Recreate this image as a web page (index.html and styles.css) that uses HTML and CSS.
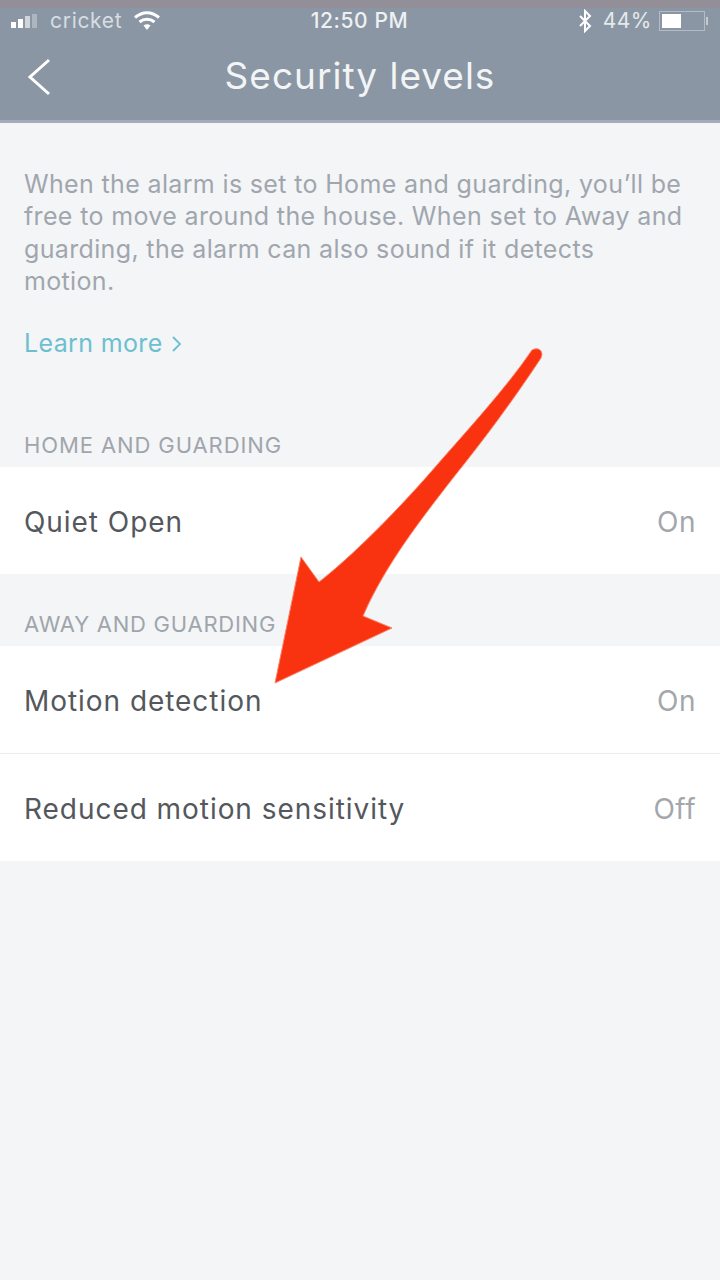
FILE: index.html
```html
<!DOCTYPE html>
<html lang="en">
<head>
<meta charset="utf-8">
<title>Security levels</title>
<link rel="stylesheet" href="styles.css">
</head>
<body>
<div class="screen">
  <header class="header">
    <div class="status">
      <div class="status-left">
        <svg class="signal" width="34" height="18" viewBox="0 0 34 18"><rect x="0" y="10" width="5" height="6" fill="#fff"/><rect x="7" y="7" width="5" height="9" fill="#fff"/><rect x="14" y="4" width="5" height="12" fill="#fff" opacity=".6"/><rect x="21" y="2" width="5" height="14" fill="#fff" opacity=".3"/></svg>
        <span class="carrier">cricket</span>
        <svg class="wifi" width="28" height="22" viewBox="0 0 28 22"><path d="M2 7.500C9.500 1 18.500 1 26 7.500M6.500 12C11 8.200 17 8.200 21.500 12" fill="none" stroke="#fff" stroke-width="3"/><path d="M10.500 15.500Q14 13 17.500 15.500L14 20Z" fill="#fff"/></svg>
      </div>
      <span class="time">12:50 PM</span>
      <div class="status-right">
        <svg class="bt" width="16" height="24" viewBox="0 0 16 24"><path d="M3 7l10 10-5 5V2l5 5L3 17" fill="none" stroke="#fff" stroke-width="2"/></svg>
        <span class="pct">44%</span>
        <div class="battery"><div class="battery-fill"></div></div>
        <div class="battery-cap"></div>
      </div>
    </div>
    <div class="nav">
      <svg class="back" width="26" height="38" viewBox="0 0 26 38"><path d="M23 2L4 19l19 17" fill="none" stroke="#fff" stroke-width="3"/></svg>
      <h1 class="title">Security levels</h1>
    </div>
  </header>

  <section class="intro">
    <p class="desc">When the alarm is set to Home and guarding, you’ll be free to move around the house. When set to Away and guarding, the alarm can also sound if it detects motion.</p>
    <a class="learn">Learn more <svg class="learn-chev" width="11" height="18" viewBox="0 0 11 18"><path d="M2 2l7 7-7 7" fill="none" stroke="#6dbfd0" stroke-width="1.800"/></svg></a>
  </section>

  <h2 class="group-label first">HOME AND GUARDING</h2>
  <div class="group">
    <div class="row"><span>Quiet Open</span><span class="val">On</span></div>
  </div>

  <h2 class="group-label">AWAY AND GUARDING</h2>
  <div class="group">
    <div class="row divided"><span>Motion detection</span><span class="val">On</span></div>
    <div class="row"><span>Reduced motion sensitivity</span><span class="val">Off</span></div>
  </div>

  <svg class="arrow" width="720" height="1280" viewBox="0 0 720 1280"><path d="M532 350Q538 347 541 351Q543 354 541 358C512 402 482 442 453 478C422 518 385 565 363 616L392 628L275 683L301 557L319 582C350 558 395 513 430 473C462 436 505 390 532 350Z" fill="#f9330f" stroke="#f9836a" stroke-width="1"/></svg>
</div>
</body>
</html>
```
FILE: styles.css
```css
* { box-sizing: border-box; }
html, body { margin: 0; padding: 0; }
body { width: 720px; height: 1280px; overflow: hidden; background: #f4f5f7; font-family: Inter, "Noto Sans", sans-serif; }
.screen { position: relative; width: 720px; height: 1280px; background: #f4f5f7; overflow: hidden; }

.header { height: 123px; background: #8a96a3; border-top: 8px solid #928f99; border-bottom: 3px solid #a5abbb; color: #fff; }
.status { display: grid; grid-template-columns: 1fr auto 1fr; align-items: center; height: 25px; padding: 0 12px 0 11px; font-size: 21px; color: #eef1f3; }
.status-left { display: flex; align-items: center; gap: 5px; }
.status-right { display: flex; align-items: center; justify-content: flex-end; }
.carrier { letter-spacing: .7px; margin-right: 6px; color: #d8dde2; }
.time { letter-spacing: .6px; font-weight: 500; }
.bt { margin-right: 10px; }
.pct { margin-right: 7px; letter-spacing: .5px; color: #e6e9ec; }
.battery { width: 46px; height: 20px; border: 1px solid #b4bbc4; padding: 2px; }
.battery-fill { width: 19px; height: 100%; background: #fff; }
.battery-cap { width: 2px; height: 8px; background: #c4cad1; margin-left: 1px; }
.nav { display: flex; align-items: center; justify-content: center; position: relative; height: 85px; }
.back { position: absolute; left: 26px; top: 25px; }
.title { margin: 0; font-size: 37px; font-weight: 400; letter-spacing: 1px; color: #f2f4f5; }

.intro { padding: 45px 31px 0 24px; }
.desc { margin: 0; font-size: 25px; line-height: 32.400px; color: #a0a6ae; letter-spacing: .35px; }
.learn { display: flex; align-items: center; margin-top: 29px; font-size: 25px; line-height: 32px; letter-spacing: .35px; color: #6dbfd0; white-space: pre; }
.learn-chev { margin-top: 2px; margin-left: 1px; }

.group-label { margin: 0; padding: 0 24px; font-size: 22px; font-weight: 400; letter-spacing: .75px; color: #a0a5ac; line-height: 30px; }
.group-label.first { margin-top: 71px; height: 37px; letter-spacing: .9px; }
.group-label:not(.first) { padding-top: 35px; height: 72px; }
.group { background: #fff; }
.row { display: flex; justify-content: space-between; align-items: center; height: 107px; padding: 3px 24px 0; font-size: 28px; letter-spacing: .95px; color: #54585c; }
.divided { border-bottom: 1px solid #ececee; height: 108px; }
.val { color: #a3a7ab; letter-spacing: .5px; }
.arrow { position: absolute; left: 0; top: 0; }
```
